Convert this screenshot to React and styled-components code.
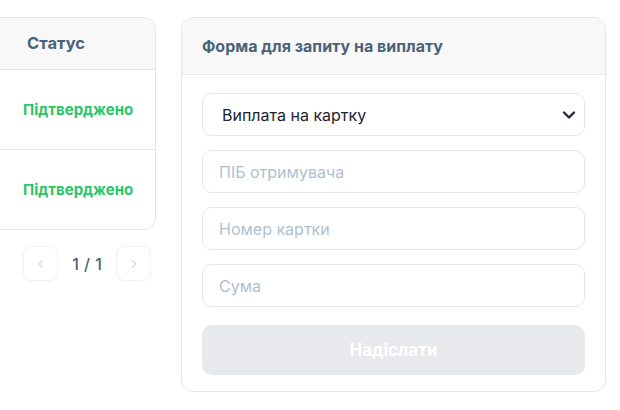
import React, { useState } from "react";
import styled, { createGlobalStyle } from "styled-components";

const GlobalStyle = createGlobalStyle`
  * { box-sizing: border-box; }
  body {
    margin: 0;
    background: #fff;
    font-family: "Inter", "Noto Sans", sans-serif;
  }
`;

// history table runs past the left edge, form stays pinned right
const Page = styled.div`
  display: flex;
  justify-content: flex-end;
  align-items: flex-start;
  gap: 25px;
  padding: 17px 14px 0 0;
  width: 620px;
  overflow: hidden;
`;

const HistoryColumn = styled.div`
  flex-shrink: 0;
  display: flex;
  flex-direction: column;
  gap: 16px;
`;

const Card = styled.div`
  background: #fff;
  border: 1px solid #e6e7ea;
  border-radius: 12px;
  overflow: hidden;
`;

const Table = styled.table`
  border-collapse: collapse;
  table-layout: fixed;
  width: ${(p) => p.$width}px;
`;

const Th = styled.th`
  height: 51px;
  padding: 0 12px 0 ${(p) => p.$pl || 23}px;
  background: #f8f8f8;
  border-bottom: 1px solid #e6e7ea;
  text-align: left;
  font-size: 16.5px;
  font-weight: 700;
  color: #4a6378;
  white-space: nowrap;
`;

const Td = styled.td`
  height: 80px;
  padding: 0 12px 0 23px;
  font-size: 15px;
  color: #4a6378;
  white-space: nowrap;
  tr:not(:last-child) > & {
    border-bottom: 1px solid #e6e7ea;
  }
`;

const Status = styled.span`
  font-weight: 700;
  color: #2dc46a;
`;

const Pager = styled.div`
  display: flex;
  justify-content: flex-end;
  align-items: center;
  gap: 13px;
  padding-right: 5px;
`;

const PageButton = styled.button`
  width: 35px;
  height: 35px;
  display: flex;
  align-items: center;
  justify-content: center;
  padding: 0;
  background: #fff;
  border: 1px solid #eef0f2;
  border-radius: 8px;
  color: #b3c1ce;
  cursor: pointer;
`;

const PageLabel = styled.span`
  font-size: 16px;
  font-weight: 500;
  color: #4a6378;
  min-width: 32px;
  text-align: center;
  word-spacing: 1px;
`;

const FormCard = styled(Card)`
  width: 425px;
  flex-shrink: 0;
`;

const FormHeader = styled.div`
  height: 57px;
  display: flex;
  align-items: center;
  padding: 0 20px;
  background: #f8f8f8;
  border-bottom: 1px solid #e6e7ea;
  font-size: 16px;
  font-weight: 700;
  color: #4a6378;
`;

const Form = styled.form`
  display: flex;
  flex-direction: column;
  gap: 14px;
  padding: 18px 20px 16px;
`;

const fieldBase = `
  width: 100%;
  height: 43px;
  border: 1px solid #e3e5e8;
  border-radius: 10px;
  background: #fff;
  font-family: "Inter", "Noto Sans", sans-serif;
  font-size: 16px;
  outline: none;
`;

const SelectWrap = styled.div`
  position: relative;
  color: #1f2a3c;
  svg {
    position: absolute;
    right: 5px;
    top: 50%;
    transform: translateY(-50%);
    pointer-events: none;
  }
`;

const Select = styled.select`
  ${fieldBase}
  appearance: none;
  padding: 0 36px 0 19px;
  color: #1c2430;
`;

const Input = styled.input`
  ${fieldBase}
  padding: 0 16px;
  color: #1c2430;
  &::placeholder {
    color: #aec1d1;
  }
`;

const Submit = styled.button`
  height: 50px;
  margin-top: 4px;
  border: none;
  border-radius: 10px;
  background: #e8e9ec;
  color: #fff;
  font-family: "Inter", "Noto Sans", sans-serif;
  font-size: 17px;
  font-weight: 700;
  cursor: not-allowed;
`;

const Chevron = ({ dir }) => (
  <svg width="14" height="14" viewBox="0 0 24 24" fill="none" stroke="currentColor" strokeWidth="1.6" strokeLinecap="round" strokeLinejoin="round">
    <path d={dir === "left" ? "M15 18l-6-6 6-6" : "M9 18l6-6-6-6"} />
  </svg>
);

const SelectArrow = () => (
  <svg width="22" height="12" viewBox="0 0 22 12" fill="none" stroke="currentColor" strokeWidth="2.4" strokeLinecap="round" strokeLinejoin="round">
    <path d="M6 3.5l5 5 5-5" />
  </svg>
);

const payouts = [
  { id: 1, status: "Підтверджено" },
  { id: 2, status: "Підтверджено" },
];

const columns = [60, 155];

export default function App() {
  const [method, setMethod] = useState("card");
  const [name, setName] = useState("");
  const [card, setCard] = useState("");
  const [amount, setAmount] = useState("");
  const ready = name && card && amount;

  return (
    <>
      <GlobalStyle />
      <Page>
        <HistoryColumn>
          <Card>
            <Table $width={columns.reduce((a, b) => a + b, 0)}>
              <colgroup>
                {columns.map((w, i) => (
                  <col key={i} width={w} />
                ))}
              </colgroup>
              <thead>
                <tr>
                  <Th />
                  <Th $pl={27}>Статус</Th>
                </tr>
              </thead>
              <tbody>
                {payouts.map((p) => (
                  <tr key={p.id}>
                    <Td />
                    <Td>
                      <Status>{p.status}</Status>
                    </Td>
                  </tr>
                ))}
              </tbody>
            </Table>
          </Card>
          <Pager>
            <PageButton aria-label="prev">
              <Chevron dir="left" />
            </PageButton>
            <PageLabel>1 / 1</PageLabel>
            <PageButton aria-label="next">
              <Chevron dir="right" />
            </PageButton>
          </Pager>
        </HistoryColumn>

        <FormCard>
          <FormHeader>Форма для запиту на виплату</FormHeader>
          <Form onSubmit={(e) => e.preventDefault()}>
            <SelectWrap>
              <Select value={method} onChange={(e) => setMethod(e.target.value)}>
                <option value="card">Виплата на картку</option>
              </Select>
              <SelectArrow />
            </SelectWrap>
            <Input placeholder="ПІБ отримувача" value={name} onChange={(e) => setName(e.target.value)} />
            <Input placeholder="Номер картки" value={card} onChange={(e) => setCard(e.target.value)} />
            <Input placeholder="Сума" value={amount} onChange={(e) => setAmount(e.target.value)} />
            <Submit type="submit" disabled={!ready}>Надіслати</Submit>
          </Form>
        </FormCard>
      </Page>
    </>
  );
}
